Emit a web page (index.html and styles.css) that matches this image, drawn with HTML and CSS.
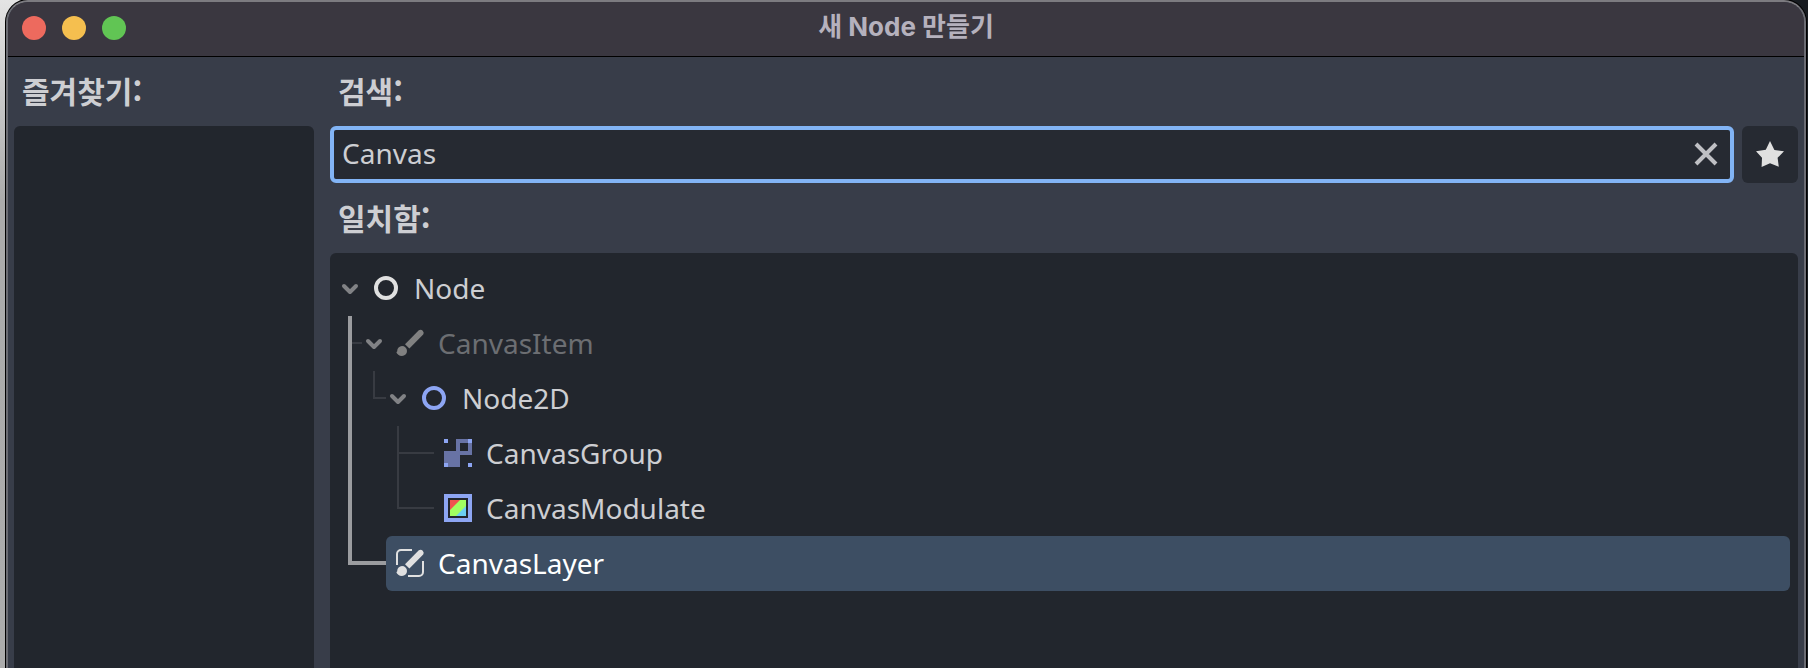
FILE: index.html
```html
<!DOCTYPE html>
<html lang="ko">
<head>
    <meta charset="UTF-8">
    <meta name="viewport" content="width=device-width, initial-scale=1.0">
    <title>새 Node 만들기</title>
    <link rel="stylesheet" href="styles.css">
</head>
<body>

<div class="window">
    <header class="titlebar">
        <div class="lights">
            <button class="light close" aria-label="닫기"></button>
            <button class="light minimize" aria-label="최소화"></button>
            <button class="light maximize" aria-label="확대"></button>
        </div>
        <h1 class="title">새 Node 만들기</h1>
    </header>

    <main class="dialog">
        <section class="favorites">
            <h2 class="label">즐겨찾기:</h2>
            <div class="panel"></div>
        </section>

        <section class="results">
            <label class="label" for="search">검색:</label>
            <div class="search-row">
                <div class="search-box">
                    <input id="search" class="search-input" type="text" value="Canvas">
                    <button class="clear-button" aria-label="지우기">
                        <svg width="32" height="32" viewBox="0 0 32 32"><path d="M6 6l20 20M26 6l-20 20" stroke="#bfc0c4" stroke-width="4"/></svg>
                    </button>
                </div>
                <button class="favorite-button" aria-label="즐겨찾기">
                    <svg width="32" height="32" viewBox="0 0 32 32"><path d="M16 3l4.400 9 9.600 1.300-6.400 6.500 1.200 9-8.800-3.500-8.400 3.800.4-9.400L2 13.300l9.800-1.500z" fill="#e0e0e0"/></svg>
                </button>
            </div>
            <h2 class="label">일치함:</h2>

            <div class="panel tree-panel">
                <ul class="tree">
                    <li>
                        <div class="row">
                            <button class="toggle" aria-label="접기"><svg width="24" height="24" viewBox="0 0 24 24"><path d="M6 10l6 6 6-6"/></svg></button>
                            <svg class="icon" viewBox="0 0 32 32"><circle cx="16" cy="16" r="10" fill="none" stroke="#e0e0e0" stroke-width="4"/></svg>
                            <span class="name">Node</span>
                        </div>
                        <ul>
                            <li class="branch on-path">
                                <div class="row disabled">
                                    <button class="toggle" aria-label="접기"><svg width="24" height="24" viewBox="0 0 24 24"><path d="M6 10l6 6 6-6"/></svg></button>
                                    <svg class="icon" viewBox="0 0 32 32" fill="#818181"><path d="M11 17.2L24.8 3.2a3.2 3.2 0 0 1 4.4 4.4L15.4 21.6z"/><path d="M8 19a5 5 0 1 1 0 10c-3 0-5-1.6-5.8-4.2.6.2 1 .1 1-.8A5 5 0 0 1 8 19z"/></svg>
                                    <span class="name">CanvasItem</span>
                                </div>
                                <ul>
                                    <li class="branch last">
                                        <div class="row">
                                            <button class="toggle" aria-label="접기"><svg width="24" height="24" viewBox="0 0 24 24"><path d="M6 10l6 6 6-6"/></svg></button>
                                            <svg class="icon" viewBox="0 0 32 32"><circle cx="16" cy="16" r="10" fill="none" stroke="#8da5f3" stroke-width="4"/></svg>
                                            <span class="name">Node2D</span>
                                        </div>
                                        <ul>
                                            <li class="branch leaf">
                                                <div class="row">
                                                    <svg class="icon" viewBox="0 0 32 32"><path d="M2 14h12V2h16v16H18v12H2zM18 6v8h8V6z" fill="#6873a5" fill-rule="evenodd"/><path d="M2 2h4v4H2zM26 2h4v4h-4zM2 26h4v4H2zM26 26h4v4h-4z" fill="#8da5f3"/></svg>
                                                    <span class="name">CanvasGroup</span>
                                                </div>
                                            </li>
                                            <li class="branch leaf last">
                                                <div class="row">
                                                    <svg class="icon" viewBox="0 0 32 32"><path d="M4 4h24v24H4z" fill="none" stroke="#8da5f3" stroke-width="4"/><path d="M8 8h16v16H8z" fill="#a1ff60"/><path d="M8 8h10L8 18z" fill="#f0524f"/><path d="M24 14v10H14z" fill="#6bcff2"/></svg>
                                                    <span class="name">CanvasModulate</span>
                                                </div>
                                            </li>
                                        </ul>
                                    </li>
                                </ul>
                            </li>
                            <li class="branch leaf on-path last">
                                <div class="row selected">
                                    <svg class="icon" viewBox="0 0 32 32" fill="#e0e0e0"><path d="M3 18V7a4 4 0 0 1 4-4h11M29 14v11a4 4 0 0 1-4 4H14" fill="none" stroke="#e0e0e0" stroke-width="2"/><path d="M11 17.2L24.8 3.2a3.2 3.2 0 0 1 4.4 4.4L15.4 21.6z"/><path d="M8 19a5 5 0 1 1 0 10c-3 0-5-1.6-5.8-4.2.6.2 1 .1 1-.8A5 5 0 0 1 8 19z"/></svg>
                                    <span class="name">CanvasLayer</span>
                                </div>
                            </li>
                        </ul>
                    </li>
                </ul>
            </div>
        </section>
    </main>
</div>

</body>
</html>
```
FILE: styles.css
```css
* {
    box-sizing: border-box;
}

body {
    margin: 0;
    height: 100vh;
    overflow: hidden;
    display: flex;
    background: linear-gradient(to right, transparent 50%, #171b20 50%), linear-gradient(#e4e4e4, #ababab 30%, #acacac);
    font-family: "Noto Sans", "Noto Sans CJK KR", sans-serif;
    font-size: 28px;
    color: #cdced2;
}

button {
    padding: 0;
    border: none;
    background: none;
    cursor: pointer;
}

svg {
    display: block;
}

ul {
    list-style: none;
    margin: 0;
    padding: 0;
}

.window {
    flex: 1;
    display: flex;
    flex-direction: column;
    margin: 0 2px 0 6px;
    border: 2px solid #6b6c73;
    border-top-color: #7c7b80;
    border-bottom: none;
    border-radius: 22px 22px 0 0;
    box-shadow: 0 0 0 1px #000;
    background-color: #383d49;
    overflow: hidden;
}

.titlebar {
    display: grid;
    grid-template-columns: 1fr auto 1fr;
    align-items: center;
    height: 55px;
    padding: 0 14px 2px;
    background-color: #3a3740;
    border-bottom: 1px solid #000;
}

.lights {
    display: flex;
    gap: 16px;
}

.light {
    width: 24px;
    height: 24px;
    border-radius: 50%;
}

.close {
    background-color: #ed6a5e;
}

.minimize {
    background-color: #f5bf4f;
}

.maximize {
    background-color: #61c554;
}

.title {
    margin: 0;
    padding-bottom: 2px;
    font-family: Inter, "Noto Sans CJK KR", sans-serif;
    font-size: 26px;
    font-weight: 700;
    line-height: 48px;
    color: #b5b1bd;
}

.dialog {
    flex: 1;
    display: flex;
    gap: 16px;
    padding: 0 6px;
}

.favorites,
.results {
    display: flex;
    flex-direction: column;
}

.favorites {
    width: 300px;
}

.results {
    flex: 1;
}

.label {
    display: block;
    margin: 0;
    padding: 0 8px 3px;
    font-family: "Noto Sans CJK KR", sans-serif;
    font-size: 30px;
    font-weight: 700;
    line-height: 66px;
}

.panel {
    flex: 1;
    border-radius: 6px 6px 0 0;
    background-color: #22262d;
}

.search-row {
    display: flex;
    gap: 8px;
    height: 57px;
    margin-bottom: 1px;
}

.search-box {
    flex: 1;
    display: flex;
    align-items: center;
    padding: 0 8px 1px;
    border: 4px solid #82b4f5;
    border-radius: 6px;
    background-color: #262a32;
}

.search-input {
    flex: 1;
    padding: 0 0 2px;
    border: none;
    outline: none;
    background: none;
    font: inherit;
    color: inherit;
}

.favorite-button {
    display: flex;
    align-items: center;
    justify-content: center;
    width: 56px;
    padding-bottom: 1px;
    border-radius: 6px;
    background-color: #262a32;
}

.tree-panel {
    padding: 8px;
}

.row {
    display: flex;
    align-items: center;
    height: 55px;
    padding-bottom: 1px;
}

.toggle {
    width: 24px;
    margin-right: 8px;
}

.toggle path {
    fill: none;
    stroke: #818285;
    stroke-width: 4;
    stroke-linecap: round;
    stroke-linejoin: round;
}

.icon {
    width: 32px;
    height: 32px;
    margin-right: 12px;
}

.name {
    line-height: 54px;
}

/* relationship lines: the trunk, then the stub that leads to the row */
.branch {
    padding-left: 24px;
    background-image: linear-gradient(#383b42, #383b42), linear-gradient(#383b42, #383b42);
    background-repeat: no-repeat;
    background-position: 11px 0, 11px 26px;
    background-size: 2px 100%, 13px 2px;
}

.branch.last {
    background-size: 2px 28px, 13px 2px;
}

.branch.leaf {
    padding-left: 48px;
    background-size: 2px 100%, 37px 2px;
}

.branch.leaf.last {
    background-size: 2px 28px, 37px 2px;
}

.branch.on-path {
    background-image: linear-gradient(#9b9c9f, #9b9c9f), linear-gradient(#383b42, #383b42);
    background-position: 10px 0, 11px 26px;
    background-size: 4px 100%, 13px 2px;
}

.branch.leaf.on-path {
    background-image: linear-gradient(#9b9c9f, #9b9c9f), linear-gradient(#9b9c9f, #9b9c9f);
    background-position: 10px 0, 10px 25px;
    background-size: 4px 29px, 38px 4px;
}

.leaf .row {
    padding-left: 8px;
}

.disabled .name {
    color: #6c6e72;
}

.selected {
    border-radius: 6px;
    background-color: #3d4e63;
    color: #fff;
}
```
